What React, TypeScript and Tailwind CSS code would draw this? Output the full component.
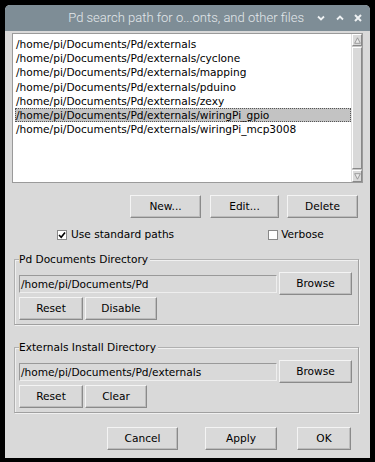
import React from "react";

const font = { fontFamily: '"DejaVu Sans", sans-serif' };

function Btn({ children, className = "" }: { children: React.ReactNode; className?: string }) {
  return (
    <div
      className={
        "flex items-center justify-center bg-[#d9d9d9] text-[10.6px] text-[#000] border border-t-[#f4f4f4] border-l-[#f4f4f4] border-r-[#8a8a8a] border-b-[#8a8a8a] shadow-[inset_-1px_-1px_0_#bcbcbc] shrink-0 " +
        className
      }
    >
      {children}
    </div>
  );
}

const paths = [
  "/home/pi/Documents/Pd/externals",
  "/home/pi/Documents/Pd/externals/cyclone",
  "/home/pi/Documents/Pd/externals/mapping",
  "/home/pi/Documents/Pd/externals/pduino",
  "/home/pi/Documents/Pd/externals/zexy",
  "/home/pi/Documents/Pd/externals/wiringPi_gpio",
  "/home/pi/Documents/Pd/externals/wiringPi_mcp3008",
];

function Group({
  label,
  value,
  second,
  secondW,
  mt,
}: {
  label: string;
  value: string;
  second: string;
  secondW: string;
  mt: string;
}) {
  return (
    <div
      className={
        "relative ml-[9px] w-[345px] h-[66px] border border-t-[#b0b0b0] border-l-[#b0b0b0] border-r-[#a0a0a0] border-b-[#a0a0a0] shadow-[inset_1px_1px_0_#f0f0f0,1px_1px_0_#f0f0f0] " +
        mt
      }
    >
      <span className="absolute -top-[8px] left-[4px] bg-[#d9d9d9] pr-[2px] text-[10.6px] leading-[14px] whitespace-nowrap">
        {label}
      </span>
      <div className="flex items-center mt-[12px] ml-[4px]">
        <div className="w-[258px] h-[18px] border border-t-[#999] border-l-[#999] border-r-[#eee] border-b-[#eee] text-[10.6px] leading-[16px] pl-[1px] whitespace-nowrap">
          {value}
        </div>
        <Btn className="w-[73px] h-[23px] ml-[2px]">Browse</Btn>
      </div>
      <div className="flex mt-[2px] ml-[4px]">
        <Btn className="w-[64px] h-[23px]">Reset</Btn>
        <Btn className={secondW + " h-[23px] ml-[2px]"}>{second}</Btn>
      </div>
    </div>
  );
}

export default function App() {
  return (
    <div className="w-[375px] h-[462px] bg-black pt-[5px] pl-[5px]" style={font}>
      <div className="w-[365px] h-[453px] flex flex-col bg-[#d9d9d9] rounded-t-[5px] overflow-hidden">
        {/* title bar */}
        <div className="h-[26px] bg-[#7e8d96] flex items-center justify-end pr-[8px] shrink-0">
          <span
            className="text-[13px] text-[#e3e8eb] mr-[13px] whitespace-nowrap"
            style={{ fontFamily: 'Roboto, "DejaVu Sans", sans-serif', fontWeight: 300 }}
          >
            Pd search path for o...onts, and other files
          </span>
          <svg width="8" height="6" viewBox="0 0 8 6" className="mr-[11px]">
            <path d="M1 1.5 L4 4.5 L7 1.5" stroke="#eef1f3" strokeWidth="1.8" fill="none" />
          </svg>
          <svg width="8" height="6" viewBox="0 0 8 6" className="mr-[10px]">
            <path d="M1 4.5 L4 1.5 L7 4.5" stroke="#eef1f3" strokeWidth="1.8" fill="none" />
          </svg>
          <svg width="8" height="8" viewBox="0 0 8 8">
            <path d="M1 1 L7 7 M7 1 L1 7" stroke="#eef1f3" strokeWidth="2" fill="none" />
          </svg>
        </div>

        {/* listbox */}
        <div className="mt-[2px] ml-[7px] w-[351px] h-[150px] border border-[#9a9a9a] bg-white flex">
          <div className="flex-1 pt-[3px] pl-[2px] text-[10.6px] leading-[14.2px] text-black">
            {paths.map((p, i) => (
              <div
                key={p}
                className={
                  "pl-px whitespace-nowrap " +
                  (i === 5 ? "bg-[#c3c3c3] outline outline-1 outline-dotted outline-[#555] -outline-offset-1" : "")
                }
              >
                {p}
              </div>
            ))}
          </div>
          <div className="w-[11px] bg-[#c8c8c8] border-l border-[#e0e0e0] flex flex-col justify-between">
            <div className="h-[12px] bg-[#d9d9d9] border border-t-white border-l-white border-r-[#888] border-b-[#888] flex items-center justify-center">
              <svg width="7" height="7" viewBox="0 0 7 7">
                <path d="M3.5 0.8 L6.3 6.3 L0.7 6.3 Z" fill="#eaeaea" stroke="#8a8a8a" strokeWidth="0.8" />
              </svg>
            </div>
            <div className="flex-1 my-px bg-[#d9d9d9] border border-t-white border-l-white border-r-[#888] border-b-[#888]" />
            <div className="h-[12px] bg-[#d9d9d9] border border-t-white border-l-white border-r-[#888] border-b-[#888] flex items-center justify-center">
              <svg width="7" height="7" viewBox="0 0 7 7">
                <path d="M3.5 6.2 L6.3 0.7 L0.7 0.7 Z" fill="#eaeaea" stroke="#8a8a8a" strokeWidth="0.8" />
              </svg>
            </div>
          </div>
        </div>

        {/* New / Edit / Delete */}
        <div className="flex mt-[12px] ml-[125px]">
          <Btn className="w-[71px] h-[23px]">New...</Btn>
          <Btn className="w-[69px] h-[23px] ml-[9px]">Edit...</Btn>
          <Btn className="w-[71px] h-[23px] ml-[8px]">Delete</Btn>
        </div>

        {/* checkboxes */}
        <div className="flex items-center mt-[9px] h-[16px] text-[10.6px]">
          <div className="ml-[52px] w-[10px] h-[10px] bg-white border border-[#888] flex items-center justify-center">
            <svg width="8" height="8" viewBox="0 0 8 8">
              <path d="M1 4 L3.2 6.3 L7 1.5" stroke="#000" strokeWidth="1.6" fill="none" />
            </svg>
          </div>
          <span className="ml-[4px]">Use standard paths</span>
          <div className="ml-[94px] w-[10px] h-[10px] bg-white border border-[#888]" />
          <span className="ml-[3px]">Verbose</span>
        </div>

        <Group
          label="Pd Documents Directory"
          value="/home/pi/Documents/Pd"
          second="Disable"
          secondW="w-[72px]"
          mt="mt-[16px]"
        />
        <Group
          label="Externals Install Directory"
          value="/home/pi/Documents/Pd/externals"
          second="Clear"
          secondW="w-[62px]"
          mt="mt-[22px]"
        />

        {/* bottom buttons */}
        <div className="flex mt-[14px] ml-[102px]">
          <Btn className="w-[71px] h-[23px]">Cancel</Btn>
          <Btn className="w-[72px] h-[23px] ml-[27px]">Apply</Btn>
          <Btn className="w-[54px] h-[23px] ml-[20px]">OK</Btn>
        </div>
      </div>
    </div>
  );
}
